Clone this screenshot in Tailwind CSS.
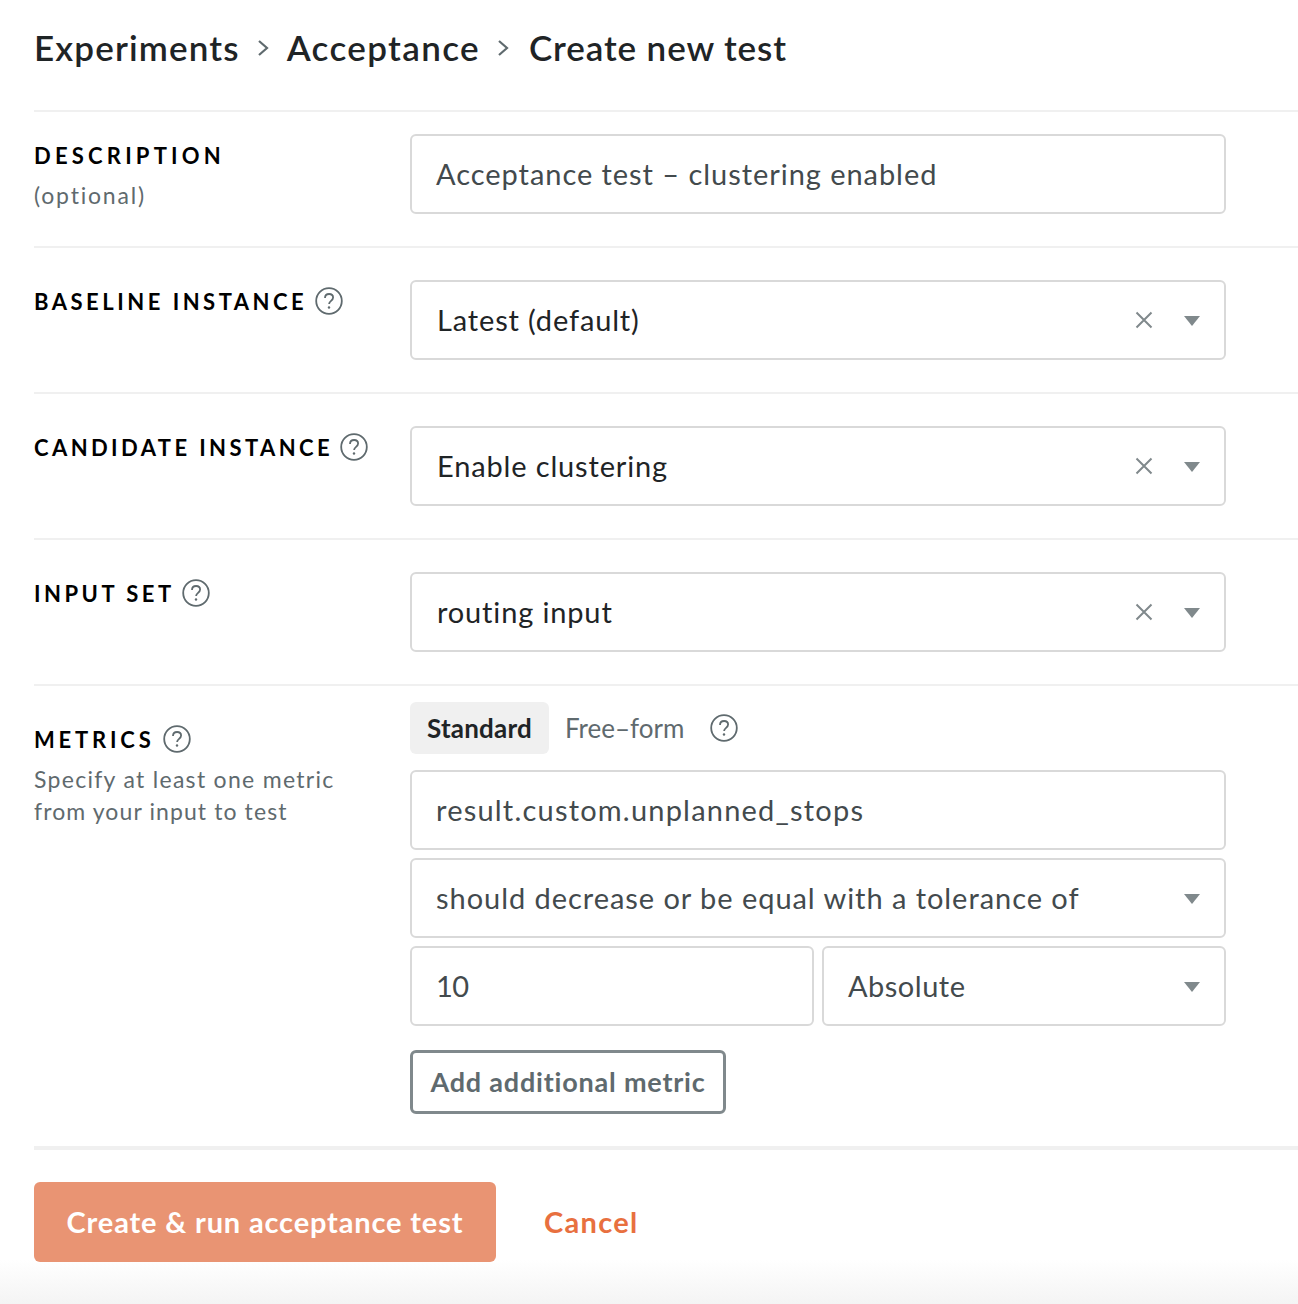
<!DOCTYPE html>
<html>
  <head>
    <meta charset="UTF-8">
    <meta name="viewport" content="width=device-width, initial-scale=1.0">
    <script src="https://cdn.jsdelivr.net/npm/@tailwindcss/browser@4"></script>
  </head>
  <body class="relative h-[1304px] overflow-hidden bg-white font-['Lato',sans-serif] text-[#1f2426]">
    <div class="pl-[34px]">
      <h1 class="flex h-[110px] items-center pb-[15px] text-[35px] font-semibold">
        <span class="tracking-[1.15px]">Experiments</span>
        <svg class="ml-[17px] mr-[16px] mt-[1px] h-[16px] w-[14px]" viewBox="0 0 14 16" fill="none" stroke="#5f6a6e" stroke-width="2.2"><path d="M2 1l8 7-8 7"/></svg>
        <span class="tracking-[1.35px]">Acceptance</span>
        <svg class="ml-[17px] mr-[18px] mt-[1px] h-[16px] w-[14px]" viewBox="0 0 14 16" fill="none" stroke="#5f6a6e" stroke-width="2.2"><path d="M2 1l8 7-8 7"/></svg>
        <span class="tracking-[0.9px]">Create new test</span>
      </h1>

      <section class="flex h-[136px] border-t-2 border-[#f0f0f0] pt-[22px]">
        <div class="w-[376px] pt-[8px]">
          <div class="text-[22px] leading-[28px] font-bold tracking-[4.2px] text-black">DESCRIPTION</div>
          <div class="mt-[9px] text-[23px] leading-[32px] tracking-[1.8px] text-[#5f6a6e]">(optional)</div>
        </div>
        <div class="flex h-[80px] w-[816px] items-center rounded-[6px] border-2 border-[#d9d9d9] px-[24px] text-[29px] tracking-[0.95px] text-[#434a4d]">Acceptance test – clustering enabled</div>
      </section>

      <section class="flex h-[146px] border-t-2 border-[#f0f0f0] pt-[32px]">
        <div class="flex h-[44px] w-[376px] items-start gap-[9px] pt-[8px]">
          <span class="text-[22px] leading-[28px] font-bold tracking-[3.5px] text-black">BASELINE INSTANCE</span>
          <svg class="-ml-[1px] -mt-px h-[28px] w-[28px]" viewBox="0 0 28 28" fill="none" stroke="#5f6a6e" stroke-width="1.8"><circle cx="14" cy="14" r="12.8"/><path d="M10 11c0-2.4 1.8-4 4.100-4s4 1.500 4 3.600c0 3.200-4 3.400-4 6.400"/><circle cx="14" cy="20.500" r="1.200" fill="#5f6a6e" stroke="none"/></svg>
        </div>
        <div class="flex h-[80px] w-[816px] items-center rounded-[6px] border-2 border-[#d9d9d9] pl-[25px] pr-[24px] text-[29px] tracking-[0.85px] text-[#1f2426]">
          <span class="flex-1">Latest (default)</span>
          <svg class="mr-[31px] h-[18px] w-[18px]" viewBox="0 0 18 18" fill="none" stroke="#80898c" stroke-width="2"><path d="M1.500 1.500l15 15M16.500 1.500l-15 15"/></svg>
          <svg class="mt-[2px] h-[10px] w-[16px]" viewBox="0 0 16 10" fill="#80898c"><path d="M0 0h16l-8 10z"/></svg>
        </div>
      </section>

      <section class="flex h-[146px] border-t-2 border-[#f0f0f0] pt-[32px]">
        <div class="flex h-[44px] w-[376px] items-start gap-[9px] pt-[8px]">
          <span class="text-[22px] leading-[28px] font-bold tracking-[3.4px] text-black">CANDIDATE INSTANCE</span>
          <svg class="-ml-[2px] -mt-px h-[28px] w-[28px]" viewBox="0 0 28 28" fill="none" stroke="#5f6a6e" stroke-width="1.8"><circle cx="14" cy="14" r="12.8"/><path d="M10 11c0-2.4 1.8-4 4.100-4s4 1.500 4 3.600c0 3.200-4 3.400-4 6.400"/><circle cx="14" cy="20.500" r="1.200" fill="#5f6a6e" stroke="none"/></svg>
        </div>
        <div class="flex h-[80px] w-[816px] items-center rounded-[6px] border-2 border-[#d9d9d9] pl-[25px] pr-[24px] text-[29px] tracking-[0.85px] text-[#1f2426]">
          <span class="flex-1">Enable clustering</span>
          <svg class="mr-[31px] h-[18px] w-[18px]" viewBox="0 0 18 18" fill="none" stroke="#80898c" stroke-width="2"><path d="M1.500 1.500l15 15M16.500 1.500l-15 15"/></svg>
          <svg class="mt-[2px] h-[10px] w-[16px]" viewBox="0 0 16 10" fill="#80898c"><path d="M0 0h16l-8 10z"/></svg>
        </div>
      </section>

      <section class="flex h-[146px] border-t-2 border-[#f0f0f0] pt-[32px]">
        <div class="flex h-[44px] w-[376px] items-start gap-[9px] pt-[8px]">
          <span class="text-[22px] leading-[28px] font-bold tracking-[3.5px] text-black">INPUT SET</span>
          <svg class="-ml-[2px] -mt-px h-[28px] w-[28px]" viewBox="0 0 28 28" fill="none" stroke="#5f6a6e" stroke-width="1.8"><circle cx="14" cy="14" r="12.8"/><path d="M10 11c0-2.4 1.8-4 4.100-4s4 1.500 4 3.600c0 3.200-4 3.400-4 6.400"/><circle cx="14" cy="20.500" r="1.200" fill="#5f6a6e" stroke="none"/></svg>
        </div>
        <div class="flex h-[80px] w-[816px] items-center rounded-[6px] border-2 border-[#d9d9d9] pl-[25px] pr-[24px] text-[29px] tracking-[0.85px] text-[#1f2426]">
          <span class="flex-1">routing input</span>
          <svg class="mr-[31px] h-[18px] w-[18px]" viewBox="0 0 18 18" fill="none" stroke="#80898c" stroke-width="2"><path d="M1.500 1.500l15 15M16.500 1.500l-15 15"/></svg>
          <svg class="mt-[2px] h-[10px] w-[16px]" viewBox="0 0 16 10" fill="#80898c"><path d="M0 0h16l-8 10z"/></svg>
        </div>
      </section>

      <section class="flex h-[462px] border-t-2 border-[#f0f0f0] pt-[16px]">
        <div class="w-[376px] pt-[24px]">
          <div class="flex items-start gap-[9px]">
            <span class="text-[22px] leading-[28px] font-bold tracking-[3.8px] text-black">METRICS</span>
            <svg class="-ml-[1px] -mt-px h-[28px] w-[28px]" viewBox="0 0 28 28" fill="none" stroke="#5f6a6e" stroke-width="1.8"><circle cx="14" cy="14" r="12.8"/><path d="M10 11c0-2.4 1.8-4 4.100-4s4 1.500 4 3.600c0 3.200-4 3.400-4 6.400"/><circle cx="14" cy="20.500" r="1.200" fill="#5f6a6e" stroke="none"/></svg>
          </div>
          <p class="mt-[9px] text-[23px] leading-[32px] tracking-[1.3px] text-[#5f6a6e]">Specify at least one metric<br><span class="tracking-[1.1px]">from your input to test</span></p>
        </div>
        <div class="w-[816px]">
          <div class="flex h-[52px] items-center text-[26px]">
            <span class="flex h-[52px] w-[139px] items-center justify-center rounded-[6px] bg-[#f0f0f0] font-bold tracking-[0.2px] text-[#1f2426]">Standard</span>
            <span class="ml-[16px] text-[#5f6a6e]">Free–form</span>
            <svg class="ml-[26px] h-[28px] w-[28px]" viewBox="0 0 28 28" fill="none" stroke="#5f6a6e" stroke-width="1.8"><circle cx="14" cy="14" r="12.8"/><path d="M10 11c0-2.4 1.8-4 4.100-4s4 1.500 4 3.600c0 3.200-4 3.400-4 6.400"/><circle cx="14" cy="20.500" r="1.200" fill="#5f6a6e" stroke="none"/></svg>
          </div>
          <div class="mt-[16px] flex h-[80px] items-center rounded-[6px] border-2 border-[#d9d9d9] px-[24px] text-[29px] tracking-[1.2px] text-[#434a4d]">result.custom.unplanned_stops</div>
          <div class="mt-[8px] flex h-[80px] items-center rounded-[6px] border-2 border-[#d9d9d9] pl-[24px] pr-[24px] text-[29px] tracking-[0.95px] text-[#434a4d]">
            <span class="flex-1">should decrease or be equal with a tolerance of</span>
            <svg class="mt-[2px] h-[10px] w-[16px]" viewBox="0 0 16 10" fill="#80898c"><path d="M0 0h16l-8 10z"/></svg>
          </div>
          <div class="mt-[8px] flex gap-[8px]">
            <div class="flex h-[80px] flex-1 items-center rounded-[6px] border-2 border-[#d9d9d9] px-[24px] text-[29px] tracking-[-0.5px] text-[#434a4d]">10</div>
            <div class="flex h-[80px] flex-1 items-center rounded-[6px] border-2 border-[#d9d9d9] pl-[24px] pr-[24px] text-[29px] tracking-[0.5px] text-[#434a4d]">
              <span class="flex-1">Absolute</span>
              <svg class="mt-[2px] h-[10px] w-[16px]" viewBox="0 0 16 10" fill="#80898c"><path d="M0 0h16l-8 10z"/></svg>
            </div>
          </div>
          <button class="mt-[24px] flex h-[64px] w-[316px] items-center justify-center rounded-[6px] border-[3px] border-[#80898c] text-[27px] font-bold tracking-[0.8px] text-[#5f6a6e]">Add additional metric</button>
        </div>
      </section>

      <footer class="flex items-center border-t-4 border-[#f0f0f0] pt-[32px]">
        <button class="relative z-10 flex h-[80px] w-[462px] items-center justify-center rounded-[6px] bg-[#e99473] text-[29px] font-bold tracking-[0.85px] text-white">Create &amp; run acceptance test</button>
        <a class="relative z-10 ml-[48px] text-[29px] font-bold tracking-[1.3px] text-[#e8703f]">Cancel</a>
      </footer>
    </div>
    <div class="absolute bottom-0 left-0 h-[44px] w-full bg-gradient-to-b from-white to-[#f4f4f4]"></div>
  </body>
</html>
